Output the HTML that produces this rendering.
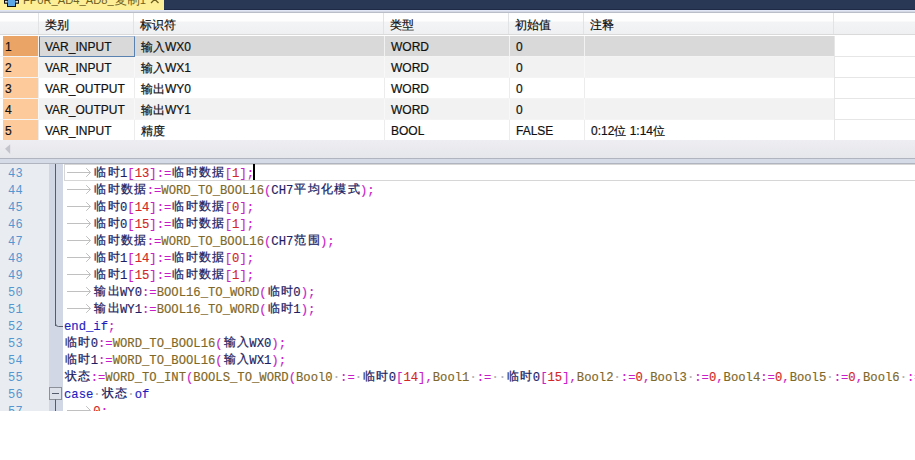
<!DOCTYPE html>
<html><head><meta charset="utf-8">
<style>
*{margin:0;padding:0;box-sizing:border-box}
html,body{width:915px;height:460px;overflow:hidden;background:#fff}
body{position:relative;font-family:"Liberation Sans",sans-serif;}
.abs{position:absolute}
#topbar{left:0;top:0;width:915px;height:10px;background:#293955;border-bottom:1px solid #1f2b46}
#tab{left:0;top:0;width:164px;height:10px;background:#fcef98;overflow:hidden}
#tabtxt{left:23px;top:-6px;font-size:11.2px;line-height:12px;color:#6e5f22;white-space:nowrap}
#tabline{left:0;top:10px;width:915px;height:3px;background:linear-gradient(#dfe5f4 0,#dfe5f4 1px,#d5d9e5 1px,#d5d9e5 2px,#b9bdc8 2px)}
#hdr{left:0;top:13px;width:915px;height:22px;background:linear-gradient(#fefefe 0,#fefefe 8px,#f3f4f5 9px,#eff0f2 21px,#dadada 21px)}
.hc{position:absolute;top:14px;height:22px;font-size:12px;line-height:22px;color:#111;-webkit-text-stroke:0.2px #111;padding-left:6px}
.vs{position:absolute;top:13px;height:21px;width:1px;background:#e2e3e5}
.row{position:absolute;left:0;width:915px;height:21px;background:#fff;border-bottom:1px solid #f4f4f4}
.rl{position:absolute;left:835px;top:20px;width:80px;height:1px;background:#e6e6e6}
.rv{position:absolute;left:834px;top:0;width:1px;height:21px;background:#e6e6e6}
#focus{left:39px;top:36px;width:96px;height:21px;border:1px solid #5a82b0;border-top-color:#a9bcd3}
.cell{position:absolute;top:0;height:20px;font-size:12px;line-height:22px;color:#111;-webkit-text-stroke:0.2px #111;padding-left:6px;white-space:nowrap}
.gap{position:absolute;left:3px;top:0;width:831px;height:20px}
.cell.rh{left:3px;width:35px;padding-left:2px}
#scroll{left:0;top:140px;width:915px;height:18px;background:linear-gradient(#eeeef2,#e6e7eb)}
#sep{left:0;top:158px;width:915px;height:6px;background:#d6dbe8;border-top:1px solid #b0b4bf;border-bottom:1px solid #b0b4bf}
#curline{left:64px;top:164px;width:851px;height:17px;border:1px solid #d6d6d6;border-right:none}
#cursor{left:253px;top:164px;width:2px;height:16px;background:#000}
#gutter{left:0;top:164px;width:49px;height:247px;background:#e9edf1}
#fold{left:49px;top:164px;width:14px;height:247px;background:#d1d7e4}
.lnum{position:absolute;left:8px;margin-top:2px;width:30px;height:17px;font-family:"Liberation Mono",monospace;font-size:12px;letter-spacing:0.2px;line-height:17px;color:#5595d0}
.ln{position:absolute;left:64px;padding-top:2px;-webkit-text-stroke:0.15px currentColor;height:17px;font-family:"Liberation Mono",monospace;font-size:12.22px;line-height:17px;white-space:pre;color:#1a1a5a}
.ln b{font-weight:normal;font-size:12px;letter-spacing:1.333px;padding-left:0.9px;margin-right:-0.9px;position:relative;top:-1px;-webkit-text-stroke:0.25px currentColor}
.T{display:inline-block;width:29.33px;height:17px;vertical-align:top}
.T svg{display:block}
.S{color:#b0b0b0}
.n{color:#1e1e64}
.o{color:#c81ec8}
.d{color:#d22828}
.f{color:#806828}
.k{color:#1e1ec0}
</style></head><body>
<div class="abs" id="topbar"></div>
<div class="abs" id="tab">
<svg class="abs" style="left:0;top:0" width="30" height="10"><path d="M4 -1V3.8H7V7H16V3.8H19V-1Z" fill="#0e0e0e"/><rect x="8" y="-1" width="7" height="7" fill="#5aa6e6"/><rect x="5" y="0.9" width="2.5" height="1.7" fill="#dcdcdc"/><rect x="15.5" y="0.9" width="2.5" height="1.7" fill="#dcdcdc"/></svg>
<div class="abs" id="tabtxt">FP0R_AD4_AD8_<span style="font-size:13px">复制</span>1</div>
<svg class="abs" style="left:148px;top:0" width="14" height="8"><path d="M3 -4.5L10.5 3M10.5 -4.5L3 3" stroke="#6e5f22" stroke-width="1.3"/></svg>
</div>
<div class="abs" id="tabline"></div>
<div class="abs" id="hdr"></div>
<div class="hc" style="left:39px">类别</div>
<div class="hc" style="left:134px">标识符</div>
<div class="hc" style="left:384px">类型</div>
<div class="hc" style="left:509px">初始值</div>
<div class="hc" style="left:584px">注释</div>
<div class="vs" style="left:38px"></div>
<div class="vs" style="left:133px"></div>
<div class="vs" style="left:383px"></div>
<div class="vs" style="left:508px"></div>
<div class="vs" style="left:583px"></div>
<div class="vs" style="left:833px"></div>

<div class="row" style="top:36px">
<div class="gap" style="background:#f2f2f2"></div>
<div class="cell rh" style="background:#e9a466">1</div>
<div class="cell" style="left:39px;width:95px;background:#d9d9d9">VAR_INPUT</div>
<div class="cell" style="left:135px;width:249px;background:#d9d9d9">输入WX0</div>
<div class="cell" style="left:385px;width:124px;background:#d9d9d9">WORD</div>
<div class="cell" style="left:510px;width:74px;background:#d9d9d9">0</div>
<div class="cell" style="left:585px;width:249px;background:#d9d9d9"></div>
<div class="rv"></div><div class="rl"></div>
</div>
<div class="row" style="top:57px">
<div class="gap" style="background:#f8f8f8"></div>
<div class="cell rh" style="background:#fdca9c">2</div>
<div class="cell" style="left:39px;width:95px;background:#f2f2f2">VAR_INPUT</div>
<div class="cell" style="left:135px;width:249px;background:#f2f2f2">输入WX1</div>
<div class="cell" style="left:385px;width:124px;background:#f2f2f2">WORD</div>
<div class="cell" style="left:510px;width:74px;background:#f2f2f2">0</div>
<div class="cell" style="left:585px;width:249px;background:#f2f2f2"></div>
<div class="rv"></div><div class="rl"></div>
</div>
<div class="row" style="top:78px">
<div class="gap" style="background:#ececec"></div>
<div class="cell rh" style="background:#fdca9c">3</div>
<div class="cell" style="left:39px;width:95px;background:#ffffff">VAR_OUTPUT</div>
<div class="cell" style="left:135px;width:249px;background:#ffffff">输出WY0</div>
<div class="cell" style="left:385px;width:124px;background:#ffffff">WORD</div>
<div class="cell" style="left:510px;width:74px;background:#ffffff">0</div>
<div class="cell" style="left:585px;width:249px;background:#ffffff"></div>
<div class="rv"></div><div class="rl"></div>
</div>
<div class="row" style="top:99px">
<div class="gap" style="background:#f8f8f8"></div>
<div class="cell rh" style="background:#fdca9c">4</div>
<div class="cell" style="left:39px;width:95px;background:#f2f2f2">VAR_OUTPUT</div>
<div class="cell" style="left:135px;width:249px;background:#f2f2f2">输出WY1</div>
<div class="cell" style="left:385px;width:124px;background:#f2f2f2">WORD</div>
<div class="cell" style="left:510px;width:74px;background:#f2f2f2">0</div>
<div class="cell" style="left:585px;width:249px;background:#f2f2f2"></div>
<div class="rv"></div><div class="rl"></div>
</div>
<div class="row" style="top:120px">
<div class="gap" style="background:#ececec"></div>
<div class="cell rh" style="background:#fdca9c">5</div>
<div class="cell" style="left:39px;width:95px;background:#ffffff">VAR_INPUT</div>
<div class="cell" style="left:135px;width:249px;background:#ffffff">精度</div>
<div class="cell" style="left:385px;width:124px;background:#ffffff">BOOL</div>
<div class="cell" style="left:510px;width:74px;background:#ffffff">FALSE</div>
<div class="cell" style="left:585px;width:249px;background:#ffffff">0:12位 1:14位</div>
<div class="rv"></div><div class="rl"></div>
</div>
<div class="abs" id="focus"></div>
<div class="abs" id="scroll"><svg class="abs" style="left:0;top:0" width="20" height="18"><path d="M5 8.7L10.2 4.2V13.9Z" fill="#c4c5cc"/></svg></div>
<div class="abs" id="sep"></div>
<div class="abs" id="gutter"></div>
<div class="abs" id="fold"></div>
<div class="abs" id="curline"></div>
<div class="abs" style="left:55px;top:164px;width:1px;height:162px;background:#555c6c"></div>
<svg class="abs" style="left:49px;top:164px" width="15" height="247"><path d="M6.5 150V159.5Q6.5 162.5 9.5 162.5H14" stroke="#555c6c" stroke-width="1" fill="none"/>
<rect x="0.5" y="223.5" width="12" height="12" fill="#dde1ea" stroke="#8c9099"/><path d="M3 229.5H10M6.5 235.5V247" stroke="#555c6c" stroke-width="1"/></svg>
<div class="abs" style="left:0;top:164px;width:915px;height:247px;overflow:hidden"><div class="ln" style="top:0px"><span class="T"><svg width="29" height="17"><path d="M3 6.5H26.5M22.2 2.2L26.5 6.5L22.2 10.8" stroke="#c0c0c0" stroke-width="1" fill="none"/></svg></span><span class="n"><b>临时</b>1</span><span class="o">[</span><span class="d">13</span><span class="o">]:=</span><span class="n"><b>临时数据</b></span><span class="o">[</span><span class="d">1</span><span class="o">];</span></div>
<div class="lnum" style="top:0px">43</div>
<div class="ln" style="top:17px"><span class="T"><svg width="29" height="17"><path d="M3 6.5H26.5M22.2 2.2L26.5 6.5L22.2 10.8" stroke="#c0c0c0" stroke-width="1" fill="none"/></svg></span><span class="n"><b>临时数据</b></span><span class="o">:=</span><span class="f">WORD_TO_BOOL16</span><span class="o">(</span><span class="n">CH7<b>平均化模式</b></span><span class="o">);</span></div>
<div class="lnum" style="top:17px">44</div>
<div class="ln" style="top:34px"><span class="T"><svg width="29" height="17"><path d="M3 6.5H26.5M22.2 2.2L26.5 6.5L22.2 10.8" stroke="#c0c0c0" stroke-width="1" fill="none"/></svg></span><span class="n"><b>临时</b>0</span><span class="o">[</span><span class="d">14</span><span class="o">]:=</span><span class="n"><b>临时数据</b></span><span class="o">[</span><span class="d">0</span><span class="o">];</span></div>
<div class="lnum" style="top:34px">45</div>
<div class="ln" style="top:51px"><span class="T"><svg width="29" height="17"><path d="M3 6.5H26.5M22.2 2.2L26.5 6.5L22.2 10.8" stroke="#c0c0c0" stroke-width="1" fill="none"/></svg></span><span class="n"><b>临时</b>0</span><span class="o">[</span><span class="d">15</span><span class="o">]:=</span><span class="n"><b>临时数据</b></span><span class="o">[</span><span class="d">1</span><span class="o">];</span></div>
<div class="lnum" style="top:51px">46</div>
<div class="ln" style="top:68px"><span class="T"><svg width="29" height="17"><path d="M3 6.5H26.5M22.2 2.2L26.5 6.5L22.2 10.8" stroke="#c0c0c0" stroke-width="1" fill="none"/></svg></span><span class="n"><b>临时数据</b></span><span class="o">:=</span><span class="f">WORD_TO_BOOL16</span><span class="o">(</span><span class="n">CH7<b>范围</b></span><span class="o">);</span></div>
<div class="lnum" style="top:68px">47</div>
<div class="ln" style="top:85px"><span class="T"><svg width="29" height="17"><path d="M3 6.5H26.5M22.2 2.2L26.5 6.5L22.2 10.8" stroke="#c0c0c0" stroke-width="1" fill="none"/></svg></span><span class="n"><b>临时</b>1</span><span class="o">[</span><span class="d">14</span><span class="o">]:=</span><span class="n"><b>临时数据</b></span><span class="o">[</span><span class="d">0</span><span class="o">];</span></div>
<div class="lnum" style="top:85px">48</div>
<div class="ln" style="top:102px"><span class="T"><svg width="29" height="17"><path d="M3 6.5H26.5M22.2 2.2L26.5 6.5L22.2 10.8" stroke="#c0c0c0" stroke-width="1" fill="none"/></svg></span><span class="n"><b>临时</b>1</span><span class="o">[</span><span class="d">15</span><span class="o">]:=</span><span class="n"><b>临时数据</b></span><span class="o">[</span><span class="d">1</span><span class="o">];</span></div>
<div class="lnum" style="top:102px">49</div>
<div class="ln" style="top:119px"><span class="T"><svg width="29" height="17"><path d="M3 6.5H26.5M22.2 2.2L26.5 6.5L22.2 10.8" stroke="#c0c0c0" stroke-width="1" fill="none"/></svg></span><span class="n"><b>输出</b>WY0</span><span class="o">:=</span><span class="f">BOOL16_TO_WORD</span><span class="o">(</span><span class="n"><b>临时</b>0</span><span class="o">);</span></div>
<div class="lnum" style="top:119px">50</div>
<div class="ln" style="top:136px"><span class="T"><svg width="29" height="17"><path d="M3 6.5H26.5M22.2 2.2L26.5 6.5L22.2 10.8" stroke="#c0c0c0" stroke-width="1" fill="none"/></svg></span><span class="n"><b>输出</b>WY1</span><span class="o">:=</span><span class="f">BOOL16_TO_WORD</span><span class="o">(</span><span class="n"><b>临时</b>1</span><span class="o">);</span></div>
<div class="lnum" style="top:136px">51</div>
<div class="ln" style="top:153px"><span class="k">end_if</span><span class="o">;</span></div>
<div class="lnum" style="top:153px">52</div>
<div class="ln" style="top:170px"><span class="n"><b>临时</b>0</span><span class="o">:=</span><span class="f">WORD_TO_BOOL16</span><span class="o">(</span><span class="n"><b>输入</b>WX0</span><span class="o">);</span></div>
<div class="lnum" style="top:170px">53</div>
<div class="ln" style="top:187px"><span class="n"><b>临时</b>1</span><span class="o">:=</span><span class="f">WORD_TO_BOOL16</span><span class="o">(</span><span class="n"><b>输入</b>WX1</span><span class="o">);</span></div>
<div class="lnum" style="top:187px">54</div>
<div class="ln" style="top:204px"><span class="n"><b>状态</b></span><span class="o">:=</span><span class="f">WORD_TO_INT</span><span class="o">(</span><span class="f">BOOLS_TO_WORD</span><span class="o">(</span><span class="f">Bool0</span><span class="S">·</span><span class="o">:=</span><span class="S">·</span><span class="n"><b>临时</b>0</span><span class="o">[</span><span class="d">14</span><span class="o">],</span><span class="f">Bool1</span><span class="S">·</span><span class="o">:=</span><span class="S">·</span><span class="S">·</span><span class="n"><b>临时</b>0</span><span class="o">[</span><span class="d">15</span><span class="o">],</span><span class="f">Bool2</span><span class="S">·</span><span class="o">:=</span><span class="d">0</span><span class="o">,</span><span class="f">Bool3</span><span class="S">·</span><span class="o">:=</span><span class="d">0</span><span class="o">,</span><span class="f">Bool4</span><span class="o">:=</span><span class="d">0</span><span class="o">,</span><span class="f">Bool5</span><span class="S">·</span><span class="o">:=</span><span class="d">0</span><span class="o">,</span><span class="f">Bool6</span><span class="S">·</span><span class="o">:=</span><span class="d">0</span><span class="o">,</span><span class="f">Bool7</span></div>
<div class="lnum" style="top:204px">55</div>
<div class="ln" style="top:221px"><span class="k">case</span><span class="S">·</span><span class="n"><b>状态</b></span><span class="S">·</span><span class="k">of</span></div>
<div class="lnum" style="top:221px">56</div>
<div class="ln" style="top:238px"><span class="T"><svg width="29" height="17"><path d="M3 6.5H26.5M22.2 2.2L26.5 6.5L22.2 10.8" stroke="#c0c0c0" stroke-width="1" fill="none"/></svg></span><span class="d">0</span><span class="o">:</span></div>
<div class="lnum" style="top:238px">57</div></div>
<div class="abs" id="cursor"></div>
</body></html>
